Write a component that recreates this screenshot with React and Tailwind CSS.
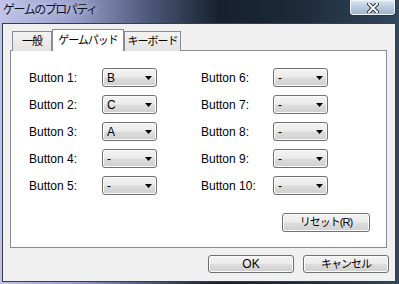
const jp = "font-['Liberation_Sans','Noto_Sans_CJK_JP',sans-serif]";

const leftRows = [
  ["Button 1:", "B"],
  ["Button 2:", "C"],
  ["Button 3:", "A"],
  ["Button 4:", "-"],
  ["Button 5:", "-"],
];
const rightRows = [
  ["Button 6:", "-"],
  ["Button 7:", "-"],
  ["Button 8:", "-"],
  ["Button 9:", "-"],
  ["Button 10:", "-"],
];

const btnFace =
  "border border-[#707070] rounded-[3px] bg-[linear-gradient(180deg,#f3f3f3_0%,#ebebeb_48%,#dddddd_52%,#cfcfcf_100%)] shadow-[inset_0_0_0_1px_#fbfbfb]";

const Combo = ({ value }) => (
  <div className={`w-[55px] h-[19px] flex items-center justify-between pl-[4px] pr-[4px] ${btnFace}`}>
    <span className="text-[12px] leading-none text-black">{value}</span>
    <svg width="7" height="4" viewBox="0 0 7 4">
      <polygon points="0,0 7,0 3.5,4" fill="#000" />
    </svg>
  </div>
);

const Column = ({ rows, labelW }) => (
  <div className="flex flex-col gap-[8px]">
    {rows.map(([label, value]) => (
      <div key={label} className="flex items-center">
        <span className="text-[12px] text-black" style={{ width: labelW }}>
          {label}
        </span>
        <Combo value={value} />
      </div>
    ))}
  </div>
);

const App = () => {
  return (
    <div
      className={`w-[399px] h-[284px] flex flex-col overflow-hidden bg-[linear-gradient(90deg,#bfc3e8_0%,#9aa0cc_18%,#4a5676_38%,#17202e_55%,#1d2a3a_75%,#33475d_100%)] ${jp}`}
    >
      <div className="h-[23px] flex justify-between items-start shrink-0">
        <span className="pl-[3px] pt-[4px] text-[12px] leading-[13px] tracking-[-1.5px] text-[#10101f] [text-shadow:0_0_6px_#e0e4ff]">
          ゲームのプロパティ
        </span>
        <div className="w-[47px] h-[16px] mr-[3px] rounded-b-[4px] border border-t-0 border-[#2b3444] bg-[linear-gradient(180deg,#dfe8f4_0%,#b9c9de_50%,#9db2cd_100%)] shadow-[inset_0_0_0_1px_#eef3fa] flex items-center justify-center">
          <svg width="12" height="10" viewBox="0 0 12 10">
            <path d="M2 1 L10 9 M10 1 L2 9" stroke="#2a2f3a" strokeWidth="4" strokeLinecap="square" />
            <path d="M2 1 L10 9 M10 1 L2 9" stroke="#fff" strokeWidth="2" strokeLinecap="square" />
          </svg>
        </div>
      </div>

      <div className="flex-1 ml-[2px] mr-[3px] mb-[2px] border border-[#3a3d44] bg-[#f0f0f0] flex flex-col">
        <div className="pt-[5px] pl-[7px] pr-[8px]">
          <div className="flex items-end h-[22px] pl-[2px] -mb-[1px] relative z-10">
            <div className="w-[40px] h-[20px] border border-b-0 border-[#898c95] bg-[linear-gradient(180deg,#f3f3f3,#e3e3e3)] flex items-center justify-center text-[11px] tracking-[-1px] text-black">
              一般
            </div>
            <div className="w-[72px] h-[22px] border border-b-0 border-[#898c95] bg-white flex items-center justify-center text-[11px] tracking-[-1px] text-black">
              ゲームパッド
            </div>
            <div className="w-[57px] h-[20px] border border-b-0 border-[#898c95] bg-[linear-gradient(180deg,#f3f3f3,#e3e3e3)] flex items-center justify-center text-[11px] tracking-[-1px] text-black">
              キーボード
            </div>
          </div>
          <div className="h-[198px] border border-[#898c95] bg-white pl-[18px] pt-[17px] flex flex-col">
            <div className="flex gap-[44px]">
              <Column rows={leftRows} labelW="73px" />
              <Column rows={rightRows} labelW="72px" />
            </div>
            <div className="flex justify-end pr-[16px] mt-[18px]">
              <div className={`w-[88px] h-[19px] flex items-center justify-center text-[11px] tracking-[-1px] text-black ${btnFace}`}>
                リセット(R)
              </div>
            </div>
          </div>
        </div>
        <div className="flex justify-end gap-[9px] pr-[6px] mt-[7px]">
          <div className={`w-[86px] h-[18px] flex items-center justify-center text-[12px] text-black ${btnFace}`}>
            OK
          </div>
          <div className={`w-[86px] h-[18px] flex items-center justify-center text-[11px] tracking-[-1px] text-black ${btnFace}`}>
            キャンセル
          </div>
        </div>
      </div>
    </div>
  );
};

export default App;
